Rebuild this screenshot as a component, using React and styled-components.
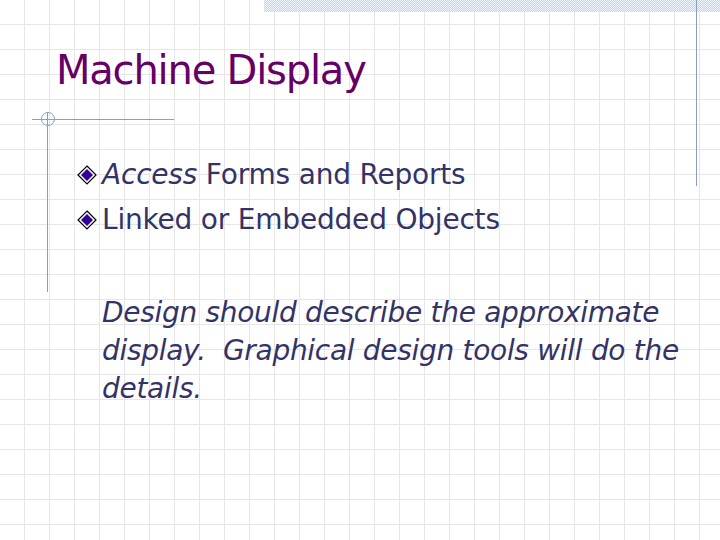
import React from "react";
import styled, { createGlobalStyle } from "styled-components";

const Global = createGlobalStyle`
  html, body { margin: 0; padding: 0; }
  body { width: 720px; height: 540px; overflow: hidden; }
`;

const Slide = styled.div`
  position: relative;
  width: 720px;
  height: 540px;
  background-color: #fff;
  background-image:
    repeating-linear-gradient(to right, transparent 0 24px, #e6e6e6 24px 25px),
    repeating-linear-gradient(to bottom, transparent 0 24px, #e6e6e6 24px 25px);
  font-family: "DejaVu Sans", Verdana, sans-serif;
  padding: 44px 0 0 56px;
  box-sizing: border-box;
`;

const TopBand = styled.div`
  position: absolute;
  left: 264px; top: 0; width: 456px; height: 12px;
  background: repeating-conic-gradient(#c8d4ee 0 25%, #eef2fb 0 50%) 0 0 / 2px 2px;
`;

const Line = styled.div`
  position: absolute;
  background: #8a9cc8;
  left: ${p => p.x}px; top: ${p => p.y}px;
  width: ${p => p.w}px; height: ${p => p.h}px;
`;

const Ring = styled.div`
  position: absolute;
  left: 41px; top: 112px; width: 12px; height: 12px;
  border: 1px solid #8a9cc8; border-radius: 50%;
`;

const Title = styled.h1`
  margin: 0;
  font-weight: normal;
  font-size: 40px;
  letter-spacing: -1.2px;
  color: #660066;
  line-height: 52px;
`;

const List = styled.ul`
  list-style: none;
  margin: 56px 0 0 20px;
  padding: 0;
`;

const Item = styled.li`
  display: flex;
  align-items: center;
  height: 45px;
  font-size: 28px;
  letter-spacing: -0.2px;
  color: #333366;
`;

const Bullet = styled.svg`
  width: 22px; height: 22px; margin-right: 4px; flex: none;
`;

const Para = styled.p`
  margin: 52px 0 0 46px;
  width: 580px;
  font-size: 28px;
  font-style: italic;
  letter-spacing: -0.3px;
  line-height: 38px;
  color: #333366;
`;

const Diamond = () => (
  <Bullet viewBox="0 0 22 22">
    <path d="M11 2 L20 11 L11 20 L2 11 Z" fill="#fff" stroke="#000" strokeWidth="1.2" />
    <path d="M11 5 L17 11 L11 17 L5 11 Z" fill="#330099" />
  </Bullet>
);

export default function App() {
  return (
    <Slide>
      <Global />
      <TopBand />
      <Line x={696} y={0} w={1} h={186} />
      <Line x={32} y={119} w={142} h={1} />
      <Line x={47} y={112} w={1} h={180} />
      <Ring />
      <Title>Machine Display</Title>
      <List>
        <Item><Diamond /><span><i>Access</i> Forms and Reports</span></Item>
        <Item><Diamond /><span>Linked or Embedded Objects</span></Item>
      </List>
      <Para>Design should describe the approximate display.&nbsp; Graphical design tools will do the details.</Para>
    </Slide>
  );
}
